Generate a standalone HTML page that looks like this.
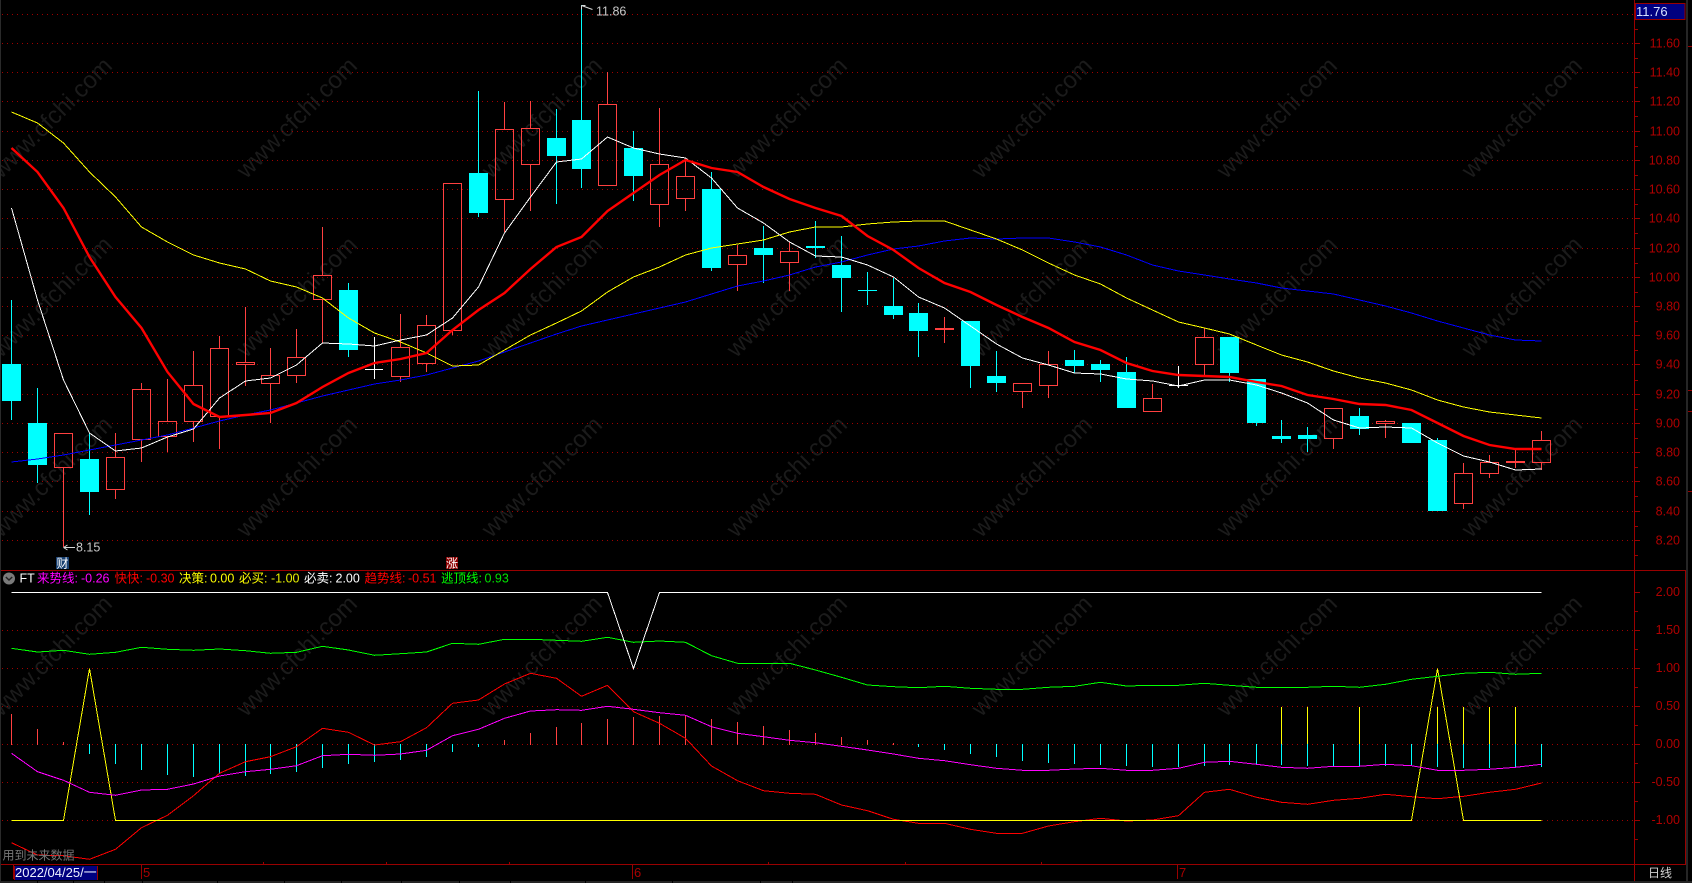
<!DOCTYPE html>
<html lang="zh">
<head>
<meta charset="utf-8">
<title>K线图</title>
<style>
html,body{margin:0;padding:0;background:#000;width:1692px;height:883px;overflow:hidden}
svg{display:block}
text{font-family:"Liberation Sans","Noto Sans CJK SC",sans-serif;font-size:12px}
.wm text{font-size:24px;fill:#1b1b1b;text-anchor:middle}
.ax text{fill:#b00000;text-anchor:end;font-size:12.5px}
.l{fill:none;stroke-width:1;shape-rendering:crispEdges}
</style>
</head>
<body>
<svg width="1692" height="883" viewBox="0 0 1692 883" xmlns="http://www.w3.org/2000/svg">
<rect width="1692" height="883" fill="#000"/>

<!-- watermark -->
<g class="wm">
<text x="51" y="126" transform="rotate(-45 51 117)">www.cfchi.com</text>
<text x="296" y="126" transform="rotate(-45 296 117)">www.cfchi.com</text>
<text x="541" y="126" transform="rotate(-45 541 117)">www.cfchi.com</text>
<text x="786" y="126" transform="rotate(-45 786 117)">www.cfchi.com</text>
<text x="1031" y="126" transform="rotate(-45 1031 117)">www.cfchi.com</text>
<text x="1276" y="126" transform="rotate(-45 1276 117)">www.cfchi.com</text>
<text x="1521" y="126" transform="rotate(-45 1521 117)">www.cfchi.com</text>
<text x="51" y="305" transform="rotate(-45 51 296)">www.cfchi.com</text>
<text x="296" y="305" transform="rotate(-45 296 296)">www.cfchi.com</text>
<text x="541" y="305" transform="rotate(-45 541 296)">www.cfchi.com</text>
<text x="786" y="305" transform="rotate(-45 786 296)">www.cfchi.com</text>
<text x="1031" y="305" transform="rotate(-45 1031 296)">www.cfchi.com</text>
<text x="1276" y="305" transform="rotate(-45 1276 296)">www.cfchi.com</text>
<text x="1521" y="305" transform="rotate(-45 1521 296)">www.cfchi.com</text>
<text x="51" y="485" transform="rotate(-45 51 476)">www.cfchi.com</text>
<text x="296" y="485" transform="rotate(-45 296 476)">www.cfchi.com</text>
<text x="541" y="485" transform="rotate(-45 541 476)">www.cfchi.com</text>
<text x="786" y="485" transform="rotate(-45 786 476)">www.cfchi.com</text>
<text x="1031" y="485" transform="rotate(-45 1031 476)">www.cfchi.com</text>
<text x="1276" y="485" transform="rotate(-45 1276 476)">www.cfchi.com</text>
<text x="1521" y="485" transform="rotate(-45 1521 476)">www.cfchi.com</text>
<text x="51" y="664" transform="rotate(-45 51 655)">www.cfchi.com</text>
<text x="296" y="664" transform="rotate(-45 296 655)">www.cfchi.com</text>
<text x="541" y="664" transform="rotate(-45 541 655)">www.cfchi.com</text>
<text x="786" y="664" transform="rotate(-45 786 655)">www.cfchi.com</text>
<text x="1031" y="664" transform="rotate(-45 1031 655)">www.cfchi.com</text>
<text x="1276" y="664" transform="rotate(-45 1276 655)">www.cfchi.com</text>
<text x="1521" y="664" transform="rotate(-45 1521 655)">www.cfchi.com</text>
</g>

<!-- grid -->
<path fill="none" stroke="#a00000" stroke-width="1" stroke-dasharray="1 4" shape-rendering="crispEdges" d="M2 14.5H1634M2 43.5H1634M2 72.5H1634M2 101.5H1634M2 131.5H1634M2 160.5H1634M2 189.5H1634M2 218.5H1634M2 248.5H1634M2 277.5H1634M2 306.5H1634M2 335.5H1634M2 364.5H1634M2 394.5H1634M2 423.5H1634M2 452.5H1634M2 481.5H1634M2 511.5H1634M2 540.5H1634M2 630.5H1634M2 668.5H1634M2 706.5H1634M2 744.5H1634M2 782.5H1634M2 820.5H1634"/>

<!-- frame -->
<path fill="none" stroke="#990000" stroke-width="1" shape-rendering="crispEdges" d="M0 570.5H1685.5V864.5H0M1634.5 0V881"/>
<!-- axis ticks -->
<path fill="none" stroke="#990000" stroke-width="1" shape-rendering="crispEdges" d="M1635 14.5h5M1635 43.5h5M1635 72.5h5M1635 101.5h5M1635 131.5h5M1635 160.5h5M1635 189.5h5M1635 218.5h5M1635 248.5h5M1635 277.5h5M1635 306.5h5M1635 335.5h5M1635 364.5h5M1635 394.5h5M1635 423.5h5M1635 452.5h5M1635 481.5h5M1635 511.5h5M1635 540.5h5M1635 29.5h3M1635 58.5h3M1635 87.5h3M1635 116.5h3M1635 146.5h3M1635 175.5h3M1635 204.5h3M1635 233.5h3M1635 263.5h3M1635 292.5h3M1635 321.5h3M1635 350.5h3M1635 380.5h3M1635 409.5h3M1635 438.5h3M1635 467.5h3M1635 496.5h3M1635 526.5h3M1635 555.5h3M1635 592.5h5M1635 630.5h5M1635 668.5h5M1635 706.5h5M1635 744.5h5M1635 782.5h5M1635 820.5h5M1635 611.5h3M1635 649.5h3M1635 687.5h3M1635 725.5h3M1635 763.5h3M1635 801.5h3M1635 839.5h3M1687 46.5h5M1687 390.5h5M1687 411.5h5M1687 491.5h5M13.5 865v14M141.5 865v14M632.5 865v14M1177.5 865v14M263.5 865v-3M386.5 865v-3M509.5 865v-3M768.5 865v-3M905.5 865v-3M1041.5 865v-3"/>
<!-- edges -->
<rect x="0" y="0" width="1" height="883" fill="#2a2a2a"/>
<rect x="1686" y="0" width="2" height="883" fill="#262626"/>
<rect x="0" y="881" width="1692" height="2" fill="#242424"/>
<path stroke="#000" stroke-width="1" d="M37.5 881v2M73.5 881v2M104.5 881v2M142.5 881v2M217.5 881v2M284.5 881v2M341.5 881v2M401.5 881v2M459.5 881v2M510.5 881v2M585.5 881v2M672.5 881v2M760.5 881v2M792.5 881v2"/>

<!-- candles: red hollow -->
<path fill="none" stroke="#ff4040" stroke-width="1" shape-rendering="crispEdges" d="M63.5 467.5V547M54.5 433.5h18v34h-18zM115.5 433V457.5M115.5 489.5V499M106.5 457.5h18v32h-18zM141.5 383V389.5M141.5 439.5V462M132.5 389.5h18v50h-18zM167.5 379V421.5M167.5 436.5V452M158.5 421.5h18v15h-18zM193.5 351V385.5M193.5 421.5V442M184.5 385.5h18v36h-18zM219.5 336V348.5M219.5 416.5V449M210.5 348.5h18v68h-18zM245.5 307V362.5M245.5 364.5V386M236.5 362.5h18v2h-18zM270.5 348V375.5M270.5 383.5V423M261.5 375.5h18v8h-18zM296.5 329V357.5M296.5 375.5V383M287.5 357.5h18v18h-18zM322.5 227V275.5M322.5 299.5V343M313.5 275.5h18v24h-18zM400.5 314V347.5M400.5 376.5V382M391.5 347.5h18v29h-18zM426.5 315V325.5M426.5 363.5V372M417.5 325.5h18v38h-18zM452.5 331V335M443.5 183.5h18v147h-18zM504.5 102V129.5M504.5 199.5V232M495.5 129.5h18v70h-18zM530.5 101V128.5M530.5 164.5V211M521.5 128.5h18v36h-18zM607.5 72V104.5M598.5 104.5h18v81h-18zM659.5 108V164.5M659.5 204.5V227M650.5 164.5h18v40h-18zM685.5 160V176.5M685.5 198.5V211M676.5 176.5h18v22h-18zM737.5 245V255.5M737.5 264.5V291M728.5 255.5h18v9h-18zM789.5 242V251.5M789.5 262.5V291M780.5 251.5h18v11h-18zM944.5 317V343M1022.5 391.5V408M1013.5 383.5h18v8h-18zM1048.5 351V364.5M1048.5 385.5V398M1039.5 364.5h18v21h-18zM1152.5 384V398.5M1143.5 398.5h18v13h-18zM1204.5 328V337.5M1204.5 364.5V376M1195.5 337.5h18v27h-18zM1333.5 438.5V449M1324.5 408.5h18v30h-18zM1385.5 420V421.5M1385.5 423.5V438M1376.5 421.5h18v2h-18zM1463.5 463V473.5M1463.5 503.5V509M1454.5 473.5h18v30h-18zM1489.5 455V462.5M1489.5 473.5V478M1480.5 462.5h18v11h-18zM1515.5 450V468M1541.5 431V440.5M1541.5 462.5V470M1532.5 440.5h18v22h-18z"/>
<rect x="935" y="328" width="19" height="2" fill="#ff4040"/>
<rect x="1506" y="461" width="19" height="2" fill="#ff4040"/>

<!-- candles: cyan -->
<path fill="none" stroke="#00ffff" stroke-width="1" shape-rendering="crispEdges" d="M11.5 300V420M37.5 388V483M89.5 433V515M348.5 283V357M478.5 91V217M556.5 109V204M581.5 5V188M633.5 131V201M711.5 172V271M763.5 226V283M815.5 221V258M841.5 236V312M867.5 272V305M858 290.5H877M893.5 278V319M918.5 303V357M970.5 321V388M996.5 351V392M1074.5 350V373M1100.5 360V382M1126.5 357V408M1229.5 337V382M1256.5 379V426M1281.5 420V443M1307.5 427V452M1359.5 408V435M1437.5 438V440"/>
<path fill="#00ffff" shape-rendering="crispEdges" d="M2 364h19v37h-19zM28 423h19v42h-19zM80 459h19v33h-19zM339 290h19v60h-19zM469 173h19v40h-19zM547 138h19v18h-19zM572 120h19v49h-19zM624 148h19v28h-19zM702 189h19v79h-19zM754 248h19v7h-19zM806 246h19v2h-19zM832 265h19v13h-19zM884 306h19v9h-19zM909 313h19v18h-19zM961 321h19v45h-19zM987 376h19v7h-19zM1065 360h19v6h-19zM1091 364h19v6h-19zM1117 372h19v36h-19zM1220 337h19v36h-19zM1247 379h19v44h-19zM1272 436h19v3h-19zM1298 435h19v4h-19zM1350 416h19v13h-19zM1402 423h19v20h-19zM1428 440h19v71h-19z"/>

<!-- candles: white cross -->
<path fill="none" stroke="#fff" stroke-width="1" shape-rendering="crispEdges" d="M374.5 337V379M365 369.5H383M1178.5 366V388M1169 385.5H1188"/>

<!-- MA lines -->
<polyline class="l" stroke="#0000ff" points="11.5,462 37.5,459 63.5,455 89.5,450 115.5,445 141.5,440 167.5,435 193.5,428 219.5,421 245.5,415 270.5,410 296.5,403 322.5,396 348.5,390 374.5,384 400.5,380 426.5,375 452.5,368 478.5,361 504.5,352 530.5,343 556.5,334 581.5,326 607.5,320 633.5,314 659.5,308 685.5,302 711.5,294 737.5,286 763.5,281 789.5,275 815.5,267 841.5,262 867.5,255 893.5,249 918.5,246 944.5,241 970.5,238 996.5,239 1022.5,238 1048.5,238 1074.5,242 1100.5,247 1126.5,255 1152.5,265 1178.5,271 1204.5,275 1229.5,279 1256.5,283 1281.5,288 1307.5,291 1333.5,294 1359.5,300 1385.5,306 1411.5,313 1437.5,321 1463.5,328 1489.5,335 1515.5,340 1541.5,341"/>
<polyline class="l" stroke="#ffff00" points="11.5,112 37.5,123 63.5,143 89.5,172 115.5,197 141.5,227 167.5,242 193.5,255 219.5,263 245.5,269 270.5,281 296.5,287 322.5,298 348.5,318 374.5,333 400.5,342 426.5,353 452.5,366 478.5,365 504.5,350 530.5,335 556.5,323 581.5,311 607.5,292 633.5,277 659.5,267 685.5,255 711.5,248 737.5,244 763.5,240 789.5,232 815.5,227 841.5,227 867.5,224 893.5,222 918.5,221 944.5,221 970.5,230 996.5,239 1022.5,250 1048.5,263 1074.5,275 1100.5,284 1126.5,298 1152.5,310 1178.5,322 1204.5,328 1229.5,334 1256.5,345 1281.5,355 1307.5,362 1333.5,371 1359.5,378 1385.5,383 1411.5,390 1437.5,400 1463.5,407 1489.5,412 1515.5,415 1541.5,418"/>
<polyline class="l" stroke="#ffffff" points="11.5,208 37.5,300 63.5,380 89.5,433 115.5,451 141.5,448 167.5,437 193.5,429 219.5,398 245.5,381 270.5,378 296.5,365 322.5,343 348.5,344 374.5,346 400.5,340 426.5,335 452.5,318 478.5,287 504.5,233 530.5,197 556.5,162 581.5,159 607.5,137 633.5,148 659.5,154 685.5,158 711.5,178 737.5,208 763.5,223 789.5,242 815.5,256 841.5,257 867.5,265 893.5,277 918.5,297 944.5,308 970.5,326 996.5,344 1022.5,358 1048.5,365 1074.5,373 1100.5,374 1126.5,379 1152.5,381 1178.5,386 1204.5,380 1229.5,380 1256.5,385 1281.5,393 1307.5,403 1333.5,420 1359.5,428 1385.5,427 1411.5,428 1437.5,443 1463.5,456 1489.5,462 1515.5,470 1541.5,469"/>
<polyline fill="none" stroke="#ff0000" stroke-width="2.4" points="11.5,148 37.5,172 63.5,208 89.5,257 115.5,297 141.5,328 167.5,372 193.5,404 219.5,417 245.5,415 270.5,413 296.5,403 322.5,387 348.5,373 374.5,363 400.5,359 426.5,353 452.5,330 478.5,310 504.5,293 530.5,269 556.5,247 581.5,237 607.5,211 633.5,193 659.5,175 685.5,160 711.5,168 737.5,172 763.5,187 789.5,199 815.5,208 841.5,216 867.5,236 893.5,250 918.5,268 944.5,283 970.5,292 996.5,305 1022.5,317 1048.5,328 1074.5,342 1100.5,350 1126.5,363 1152.5,371 1178.5,375 1204.5,376 1229.5,377 1256.5,382 1281.5,386 1307.5,395 1333.5,399 1359.5,404 1385.5,405 1411.5,410 1437.5,423 1463.5,436 1489.5,445 1515.5,449 1541.5,449"/>

<!-- high/low markers -->
<path fill="none" stroke="#d8d8d8" stroke-width="1" d="M63.5 547.5H75M63.5 547.5l4-2.5M63.5 547.5l4 2.5M581.5 5.5l11 4M581.5 5.5h4M581.5 5.5v4"/>
<text x="76" y="551.5" fill="#c8c8c8" style="font-size:12.5px">8.15</text>
<text x="596" y="15.5" fill="#c8c8c8" style="font-size:12.5px">11.86</text>

<!-- signal labels -->
<rect x="56" y="557" width="13" height="12" fill="#173f70"/>
<text x="56.5" y="567.5" fill="#fff">财</text>
<rect x="446" y="557" width="12" height="12" fill="#8b0000"/>
<text x="446" y="567.5" fill="#fff">涨</text>

<!-- sub chart bars -->
<path fill="none" stroke="#ff4040" stroke-width="1" shape-rendering="crispEdges" d="M11.5 745V714M37.5 745V729M63.5 745V742M504.5 745V740M530.5 745V733M556.5 745V727M581.5 745V723M607.5 745V719M633.5 745V717M659.5 745V716M685.5 745V716M711.5 745V719M737.5 745V722M763.5 745V726M789.5 745V730M815.5 745V733M841.5 745V737M867.5 745V740M893.5 745V743"/>
<path fill="none" stroke="#00ffff" stroke-width="1" shape-rendering="crispEdges" d="M89.5 744V754M115.5 744V764M141.5 744V770M167.5 744V775M193.5 744V777M219.5 744V774M245.5 744V776M270.5 744V774M296.5 744V772M322.5 744V768M348.5 744V764M374.5 744V762M400.5 744V760M426.5 744V757M452.5 744V752M478.5 744V747M918.5 744V747M944.5 744V750M970.5 744V754M996.5 744V757M1022.5 744V761M1048.5 744V763M1074.5 744V764M1100.5 744V765M1126.5 744V766M1152.5 744V767M1178.5 744V767M1204.5 744V766M1229.5 744V765M1256.5 744V765M1281.5 744V765M1307.5 744V766M1333.5 744V766M1359.5 744V766M1385.5 744V766M1411.5 744V765M1437.5 744V767M1463.5 744V768M1489.5 744V768M1515.5 744V767M1541.5 744V767"/>
<path fill="none" stroke="#ffff00" stroke-width="1" shape-rendering="crispEdges" d="M1281.5 707V744M1307.5 707V744M1359.5 707V744M1437.5 707V744M1463.5 707V744M1489.5 707V744M1515.5 707V744"/>

<!-- sub chart lines -->
<polyline class="l" stroke="#ff0000" points="11.5,842.7 37.5,855 63.5,855.7 89.5,859.3 115.5,849.3 141.5,827.7 167.5,815.3 193.5,795.7 219.5,773.3 245.5,761.7 270.5,756.7 296.5,746.7 322.5,728.3 348.5,732.3 374.5,745 400.5,741.7 426.5,727.7 452.5,703.3 478.5,700 504.5,684 530.5,673.3 556.5,678.3 581.5,696.3 607.5,685.3 633.5,711.7 659.5,723.3 685.5,738.3 711.5,766 737.5,780.7 763.5,790.7 789.5,793.3 815.5,794.3 841.5,805 867.5,810.7 893.5,819.3 918.5,823.3 944.5,823.3 970.5,829.3 996.5,833.3 1022.5,833.3 1048.5,826 1074.5,821.7 1100.5,818.3 1126.5,821 1152.5,820 1178.5,815.7 1204.5,792.3 1229.5,789.3 1256.5,797.3 1281.5,802.3 1307.5,804.3 1333.5,800.3 1359.5,798.3 1385.5,794.3 1411.5,796.7 1437.5,798.7 1463.5,796.3 1489.5,792.3 1515.5,789.3 1541.5,783"/>
<path class="l" stroke="#ffff00" d="M11.5 820.5H63.5L89.5 668.5L115.5 820.5H1411.5L1437.5 668.5L1463.5 820.5H1541.5"/>
<polyline class="l" stroke="#00ff00" points="11.5,648.3 37.5,652 63.5,650.3 89.5,654.3 115.5,652.3 141.5,647.3 167.5,649.3 193.5,650.3 219.5,649 245.5,650.7 270.5,653.3 296.5,652.3 322.5,646.3 348.5,650 374.5,655.3 400.5,653.7 426.5,652 452.5,643.3 478.5,644.3 504.5,639.3 530.5,639.3 556.5,640.3 581.5,641.3 607.5,637.3 633.5,642.3 659.5,641 685.5,642.3 711.5,655.7 737.5,663.3 763.5,663.3 789.5,663.3 815.5,670 841.5,677.3 867.5,685 893.5,686.7 918.5,687.7 944.5,686.3 970.5,688.3 996.5,689.3 1022.5,689.3 1048.5,687.3 1074.5,686.3 1100.5,682.3 1126.5,686 1152.5,685.3 1178.5,685.3 1204.5,683.3 1229.5,685.3 1256.5,687.3 1281.5,687.3 1307.5,687.3 1333.5,686.3 1359.5,687.3 1385.5,684.3 1411.5,679.3 1437.5,676.3 1463.5,673.3 1489.5,672.3 1515.5,674.3 1541.5,673.3"/>
<polyline class="l" stroke="#ff00ff" points="11.5,753.3 37.5,771.7 63.5,780.3 89.5,792.3 115.5,795.3 141.5,790 167.5,789.3 193.5,784 219.5,776 245.5,771.7 270.5,769.3 296.5,765.7 322.5,755.7 348.5,754.3 374.5,755.3 400.5,754 426.5,750.3 452.5,735.7 478.5,729.3 504.5,718.3 530.5,711 556.5,709.7 581.5,710.3 607.5,706.3 633.5,709.3 659.5,712.7 685.5,715.3 711.5,726.7 737.5,733.3 763.5,736.7 789.5,740.3 815.5,742.7 841.5,746.3 867.5,750 893.5,754 918.5,758.3 944.5,760.7 970.5,764.7 996.5,768.3 1022.5,770.3 1048.5,770.3 1074.5,769 1100.5,768.3 1126.5,770.3 1152.5,770.3 1178.5,768.3 1204.5,762.3 1229.5,761.3 1256.5,764.3 1281.5,767.3 1307.5,768.3 1333.5,766.3 1359.5,766.3 1385.5,764.3 1411.5,765.7 1437.5,770.3 1463.5,770.3 1489.5,769.3 1515.5,767.3 1541.5,764.3"/>
<path class="l" stroke="#ffffff" d="M11.5 592.5H607.5L633.5 668.5L659.5 592.5H1541.5"/>

<!-- indicator header -->
<circle cx="9" cy="578.5" r="6" fill="#7a7a7a"/>
<path d="M5.8 577l3.2 3 3.2-3" fill="none" stroke="#222" stroke-width="1.4"/>
<text y="582.5" style="font-size:12.5px">
<tspan x="19.5" fill="#ffffff">FT</tspan>
<tspan x="37" fill="#ff00ff">来势线:</tspan>
<tspan x="81" fill="#ff00ff">-0.26</tspan>
<tspan x="114.5" fill="#ff0000">快快:</tspan>
<tspan x="146" fill="#ff0000">-0.30</tspan>
<tspan x="179" fill="#ffff00">决策:</tspan>
<tspan x="210" fill="#ffff00">0.00</tspan>
<tspan x="239" fill="#ffff00">必买:</tspan>
<tspan x="271" fill="#e6f000">-1.00</tspan>
<tspan x="304" fill="#ffffff">必卖:</tspan>
<tspan x="335.5" fill="#ffffff">2.00</tspan>
<tspan x="364.5" fill="#ff0000">趋势线:</tspan>
<tspan x="408" fill="#ff0000">-0.51</tspan>
<tspan x="441" fill="#00ff00">逃顶线:</tspan>
<tspan x="484.5" fill="#00e000">0.93</tspan>
</text>

<!-- price axis -->
<g class="ax">
<text x="1680" y="47.5">11.60</text>
<text x="1680" y="76.5">11.40</text>
<text x="1680" y="105.5">11.20</text>
<text x="1680" y="135.5">11.00</text>
<text x="1680" y="164.5">10.80</text>
<text x="1680" y="193.5">10.60</text>
<text x="1680" y="222.5">10.40</text>
<text x="1680" y="252.5">10.20</text>
<text x="1680" y="281.5">10.00</text>
<text x="1680" y="310.5">9.80</text>
<text x="1680" y="339.5">9.60</text>
<text x="1680" y="368.5">9.40</text>
<text x="1680" y="398.5">9.20</text>
<text x="1680" y="427.5">9.00</text>
<text x="1680" y="456.5">8.80</text>
<text x="1680" y="485.5">8.60</text>
<text x="1680" y="515.5">8.40</text>
<text x="1680" y="544.5">8.20</text>
<text x="1680" y="596">2.00</text>
<text x="1680" y="634">1.50</text>
<text x="1680" y="672">1.00</text>
<text x="1680" y="710">0.50</text>
<text x="1680" y="748">0.00</text>
<text x="1680" y="786">-0.50</text>
<text x="1680" y="824">-1.00</text>
</g>
<rect x="1635.5" y="3.5" width="49.5" height="16" fill="#000080" stroke="#990000" stroke-width="1"/>
<text x="1636" y="16" fill="#d6e2ff" style="font-size:13px">11.76</text>

<!-- bottom bar -->
<text x="2.5" y="859.5" fill="#777777">用到未来数据</text>
<rect x="14" y="866" width="83" height="14" fill="#000080"/>
<path d="M14.5 866v14M97.5 866v14" stroke="#990000" stroke-width="1"/>
<text x="15" y="877" fill="#eef2ff" style="font-size:13px">2022/04/25/一</text>
<text x="143" y="877" fill="#a80000" style="font-size:13px">5</text>
<text x="634" y="877" fill="#a80000" style="font-size:13px">6</text>
<text x="1179" y="877" fill="#a80000" style="font-size:13px">7</text>
<text x="1648" y="877" fill="#d0d0d0">日线</text>
</svg>
</body>
</html>
